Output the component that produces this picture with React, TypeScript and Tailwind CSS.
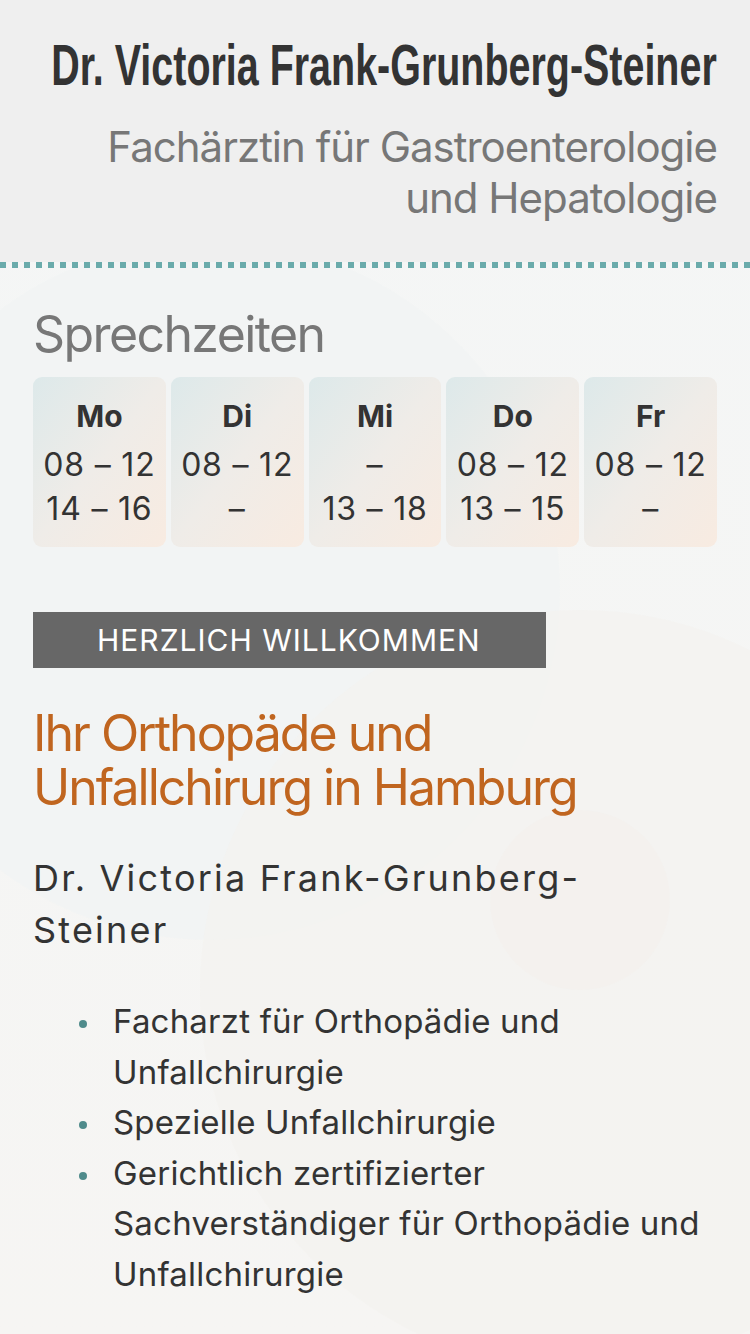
const hours = [
  { day: "Mo", am: "08 – 12", pm: "14 – 16" },
  { day: "Di", am: "08 – 12", pm: "–" },
  { day: "Mi", am: "–", pm: "13 – 18" },
  { day: "Do", am: "08 – 12", pm: "13 – 15" },
  { day: "Fr", am: "08 – 12", pm: "–" },
];

const items = [
  "Facharzt für Orthopädie und Unfallchirurgie",
  "Spezielle Unfallchirurgie",
  "Gerichtlich zertifizierter Sachverständiger für Orthopädie und Unfallchirurgie",
];

export default function App() {
  return (
    <div className="relative min-h-screen overflow-hidden bg-gradient-to-b from-[#f4f6f6] to-[#f6f5f3] font-['Inter','Noto_Sans',sans-serif] text-[#333]">
      {/* faint background circles */}
      <div className="pointer-events-none absolute left-[-140px] top-[240px] h-[700px] w-[700px] rounded-full bg-[#f0f4f4]/60" />
      <div className="pointer-events-none absolute left-[200px] top-[610px] h-[760px] w-[760px] rounded-full bg-[#f4f1ee]/60" />
      <div className="pointer-events-none absolute left-[490px] top-[810px] h-[180px] w-[180px] rounded-full bg-[#f3f0ed]/60" />

      <header className="relative bg-[#efefef] px-[33px] pb-[39px] pt-[33px] text-right">
        <div className="flex justify-end">
          <h1 className="origin-right scale-x-[0.68] whitespace-nowrap font-['Liberation_Sans','Arial',sans-serif] text-[58px] font-bold leading-[64px] text-[#333]">
            Dr. Victoria Frank-Grunberg-Steiner
          </h1>
        </div>
        <p className="mt-[24px] text-[42px] leading-[51px] tracking-[-1px] text-[#777]">
          Fachärztin für Gastroenterologie
          <br />
          und Hepatologie
        </p>
      </header>
      <div className="relative h-[6px] bg-[repeating-linear-gradient(to_right,#6aabab_0px,#6aabab_6px,transparent_6px,transparent_12px)]" />

      <main className="relative px-[33px] pb-10">
        <h2 className="mt-[38px] text-[50px] leading-[56px] tracking-[-1.6px] text-[#777]">Sprechzeiten</h2>
        <div className="mt-[15px] grid grid-cols-5 gap-[5px]">
          {hours.map((h) => (
            <div
              key={h.day}
              className="flex h-[170px] flex-col items-center rounded-[9px] bg-gradient-to-br from-[#dde9ea] via-[#efece8] to-[#f8ebe1] pt-[21px] text-[#333]"
            >
              <div className="text-[30px] font-bold leading-[36px]">{h.day}</div>
              <div className="mt-[9px] whitespace-nowrap text-[32px] leading-[44px] tracking-[0.8px]">{h.am}</div>
              <div className="whitespace-nowrap text-[32px] leading-[44px] tracking-[0.8px]">{h.pm}</div>
            </div>
          ))}
        </div>

        <div className="mt-[65px] flex h-[56px] w-[513px] items-center bg-[#676767] pl-[64px] text-[30px] tracking-[1px] text-white">
          HERZLICH WILLKOMMEN
        </div>

        <h3 className="mt-[38px] text-[50px] leading-[54px] tracking-[-2px] text-[#c0651f]">
          Ihr Orthopäde und
          <br />
          Unfallchirurg in Hamburg
        </h3>

        <p className="mt-[38px] w-[610px] text-[36px] leading-[52px] tracking-[2.2px] text-[#333]">
          Dr. Victoria Frank-Grunberg-Steiner
        </p>

        <ul className="mt-[40px] pl-[80px] pr-[10px] text-[33px] leading-[50.6px] tracking-[0.2px] text-[#333]">
          {items.map((it) => (
            <li key={it} className="relative">
              <span className="absolute left-[-34px] top-[24px] h-[8px] w-[8px] rounded-full bg-[#4f8b8b]" />
              {it}
            </li>
          ))}
        </ul>
      </main>
    </div>
  );
}
